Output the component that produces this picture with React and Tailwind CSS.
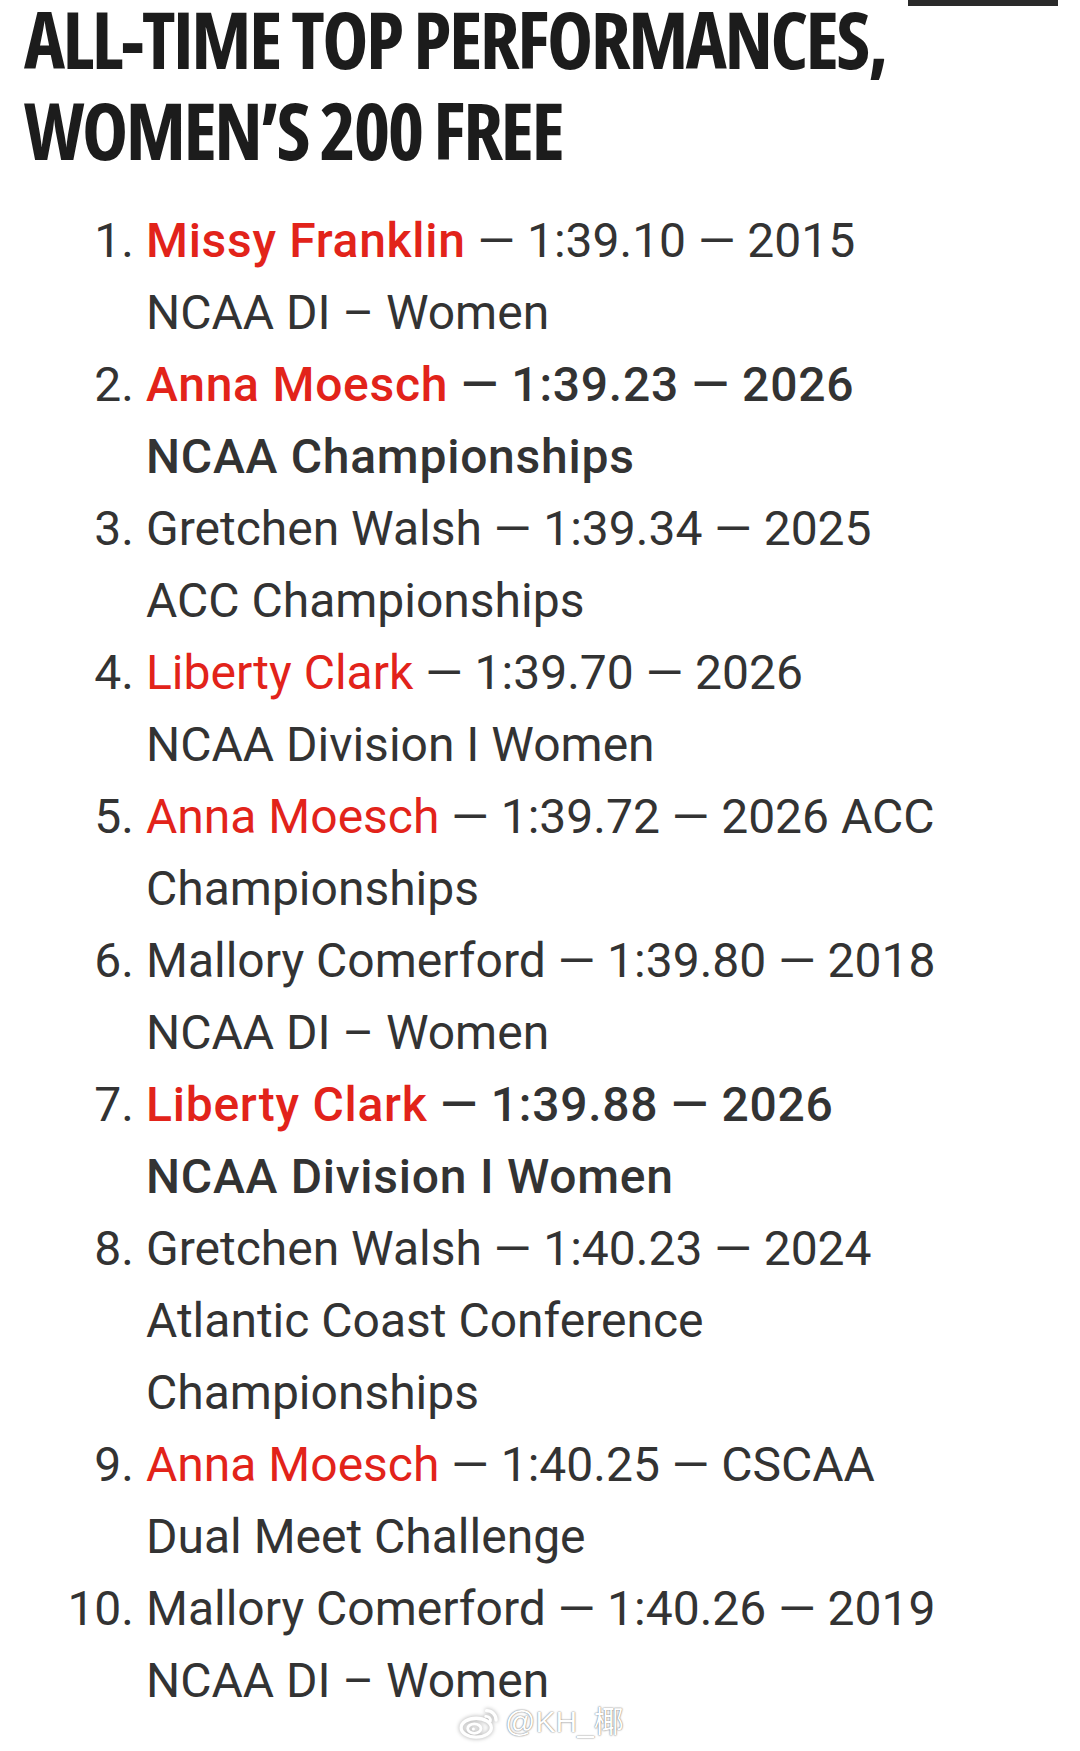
import React from "react";

const RED = "text-[#e2231a]";

const items = [
  { n: "1.", name: "Missy Franklin", red: true, strongName: true, lines: ["— 1:39.10 — 2015", "NCAA DI – Women"] },
  { n: "2.", name: "Anna Moesch", red: true, bold: true, lines: ["— 1:39.23 — 2026", "NCAA Championships"] },
  { n: "3.", name: "Gretchen Walsh", lines: ["— 1:39.34 — 2025", "ACC Championships"] },
  { n: "4.", name: "Liberty Clark", red: true, lines: ["— 1:39.70 — 2026", "NCAA Division I Women"] },
  { n: "5.", name: "Anna Moesch", red: true, lines: ["— 1:39.72 — 2026 ACC", "Championships"] },
  { n: "6.", name: "Mallory Comerford", lines: ["— 1:39.80 — 2018", "NCAA DI – Women"] },
  { n: "7.", name: "Liberty Clark", red: true, bold: true, lines: ["— 1:39.88 — 2026", "NCAA Division I Women"] },
  { n: "8.", name: "Gretchen Walsh", lines: ["— 1:40.23 — 2024", "Atlantic Coast Conference", "Championships"] },
  { n: "9.", name: "Anna Moesch", red: true, lines: ["— 1:40.25 — CSCAA", "Dual Meet Challenge"] },
  { n: "10.", name: "Mallory Comerford", lines: ["— 1:40.26 — 2019", "NCAA DI – Women"] },
];

function WeiboMark() {
  return (
    <svg width="44" height="34" viewBox="0 0 46 36" fill="none" className="drop-shadow-[0_0_2px_rgba(0,0,0,0.35)]">
      <ellipse cx="19" cy="24" rx="16" ry="10" stroke="#fff" strokeWidth="3.5" />
      <ellipse cx="17" cy="25" rx="7" ry="5" stroke="#fff" strokeWidth="3" />
      <circle cx="16" cy="25.5" r="1.6" fill="#fff" />
      <path d="M30 6 a10 10 0 0 1 10 10" stroke="#fff" strokeWidth="3.5" strokeLinecap="round" />
      <path d="M29 12 a4.5 4.5 0 0 1 5 5" stroke="#fff" strokeWidth="3" strokeLinecap="round" />
    </svg>
  );
}

export default function App() {
  return (
    <div className="relative w-[1080px] min-h-[1751px] bg-white overflow-hidden">
      {/* top dark bar */}
      <div className="flex justify-end pr-[22px]">
        <div className="w-[150px] h-[6px] bg-[#2a2a2a]"></div>
      </div>

      {/* Title */}
      <h1
        className="-mt-[12px] pl-[24px] text-[78px] leading-[91px] font-bold tracking-[-2.5px] text-[#1c1c1c] uppercase"
        style={{ fontFamily: '"Open Sans", "Liberation Sans Narrow", sans-serif', fontStretch: "75%" }}
      >
        All-Time Top Performances,
        <br />
        Women’s 200 Free
      </h1>

      {/* List */}
      <ol
        className="mt-[29px] flex flex-col text-[48px] leading-[72px] text-[#333]"
        style={{ fontFamily: 'Roboto, "Noto Sans", sans-serif' }}
      >
        {items.map((it) => (
          <li key={it.n} className="flex gap-[12px]">
            <span className="w-[134px] shrink-0 text-right">{it.n}</span>
            <div className={`flex flex-col whitespace-nowrap ${it.bold ? "font-medium tracking-[0.75px]" : "font-normal"}`}>
              <span>
                <span className={`${it.red ? RED : ""} ${it.strongName ? "font-medium tracking-[0.7px]" : ""}`}>{it.name}</span> {it.lines[0]}
              </span>
              {it.lines.slice(1).map((l) => (
                <span key={l}>{l}</span>
              ))}
            </div>
          </li>
        ))}
      </ol>

      {/* watermark */}
      <div
        className="absolute left-[458px] top-[1705px] flex items-center gap-[3px] text-white text-[30px] leading-none"
        style={{ fontFamily: '"Liberation Sans", "Noto Sans CJK SC", sans-serif', textShadow: "0 0 2px rgba(0,0,0,0.45), 0 0 1px rgba(0,0,0,0.4)" }}
      >
        <WeiboMark />
        <span>@KH_椰</span>
      </div>
    </div>
  );
}
